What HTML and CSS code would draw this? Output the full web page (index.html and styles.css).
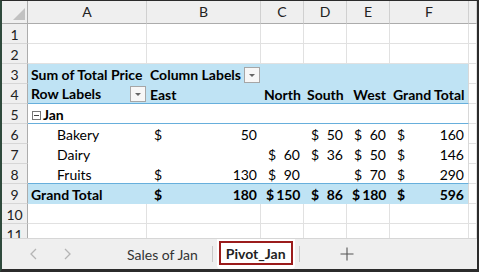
FILE: index.html
```html
<!DOCTYPE html>
<html lang="en">
<head>
<meta charset="UTF-8">
<title>Pivot_Jan</title>
<link rel="stylesheet" href="styles.css">
</head>
<body>
<div class="frame">
    <div class="sheet">
        <!-- column headers -->
        <div class="row head">
            <div class="rn corner"><span class="tri"></span></div>
            <div class="ch">A</div>
            <div class="ch">B</div>
            <div class="ch">C</div>
            <div class="ch">D</div>
            <div class="ch">E</div>
            <div class="ch">F</div>
            <div class="ch last"></div>
        </div>

        <div class="row">
            <div class="rn">1</div>
            <div class="c"></div><div class="c"></div><div class="c"></div><div class="c"></div><div class="c"></div><div class="c"></div><div class="c"></div>
        </div>
        <div class="row">
            <div class="rn">2</div>
            <div class="c"></div><div class="c"></div><div class="c"></div><div class="c"></div><div class="c"></div><div class="c"></div><div class="c"></div>
        </div>

        <!-- pivot table -->
        <div class="row">
            <div class="rn">3</div>
            <div class="c pv b">Sum of Total Price</div>
            <div class="c pv b split">Column Labels <span class="dd"></span></div>
            <div class="c pv"></div><div class="c pv"></div><div class="c pv"></div>
            <div class="c pv edge"></div>
            <div class="c"></div>
        </div>
        <div class="row">
            <div class="rn">4</div>
            <div class="c pv b line split">Row Labels <span class="dd"></span></div>
            <div class="c pv b line">East</div>
            <div class="c pv b line r">North</div>
            <div class="c pv b line r">South</div>
            <div class="c pv b line r">West</div>
            <div class="c pv b line r edge">Grand Total</div>
            <div class="c"></div>
        </div>
        <div class="row">
            <div class="rn">5</div>
            <div class="c pw b line"><span class="minus"></span>Jan</div>
            <div class="c pw line"></div><div class="c pw line"></div><div class="c pw line"></div><div class="c pw line"></div>
            <div class="c pw line edge"></div>
            <div class="c"></div>
        </div>
        <div class="row">
            <div class="rn">6</div>
            <div class="c pw item">Bakery</div>
            <div class="c pw acc"><span>$</span><span>50</span></div>
            <div class="c pw"></div>
            <div class="c pw acc"><span>$</span><span>50</span></div>
            <div class="c pw acc"><span>$</span><span>60</span></div>
            <div class="c pw acc edge"><span>$</span><span>160</span></div>
            <div class="c"></div>
        </div>
        <div class="row">
            <div class="rn">7</div>
            <div class="c pw item">Dairy</div>
            <div class="c pw"></div>
            <div class="c pw acc"><span>$</span><span>60</span></div>
            <div class="c pw acc"><span>$</span><span>36</span></div>
            <div class="c pw acc"><span>$</span><span>50</span></div>
            <div class="c pw acc edge"><span>$</span><span>146</span></div>
            <div class="c"></div>
        </div>
        <div class="row">
            <div class="rn">8</div>
            <div class="c pw item line">Fruits</div>
            <div class="c pw acc line"><span>$</span><span>130</span></div>
            <div class="c pw acc line"><span>$</span><span>90</span></div>
            <div class="c pw line"></div>
            <div class="c pw acc line"><span>$</span><span>70</span></div>
            <div class="c pw acc line edge"><span>$</span><span>290</span></div>
            <div class="c"></div>
        </div>
        <div class="row">
            <div class="rn">9</div>
            <div class="c pv b">Grand Total</div>
            <div class="c pv b acc"><span>$</span><span>180</span></div>
            <div class="c pv b acc tight"><span>$</span><span>150</span></div>
            <div class="c pv b acc"><span>$</span><span>86</span></div>
            <div class="c pv b acc tight"><span>$</span><span>180</span></div>
            <div class="c pv b acc edge"><span>$</span><span>596</span></div>
            <div class="c"></div>
        </div>

        <div class="row">
            <div class="rn">10</div>
            <div class="c"></div><div class="c"></div><div class="c"></div><div class="c"></div><div class="c"></div><div class="c"></div><div class="c"></div>
        </div>
        <div class="row">
            <div class="rn">11</div>
            <div class="c"></div><div class="c"></div><div class="c"></div><div class="c"></div><div class="c"></div><div class="c"></div><div class="c"></div>
        </div>
    </div>

    <!-- sheet tabs -->
    <div class="tabs">
        <div class="nav">
            <svg width="10" height="14" viewBox="0 0 10 14"><path d="M7 2 L2 7 L7 12" fill="none" stroke="#b4b4b4" stroke-width="1.3"/></svg>
            <svg width="10" height="14" viewBox="0 0 10 14"><path d="M3 2 L8 7 L3 12" fill="none" stroke="#b4b4b4" stroke-width="1.3"/></svg>
        </div>
        <div class="tab">Sales of Jan</div>
        <div class="sep"></div>
        <div class="tab active"><span class="box">Pivot_Jan</span></div>
        <div class="sep"></div>
        <div class="add">
            <svg width="14" height="14" viewBox="0 0 14 14"><path d="M7 0.5 V13.5 M0.5 7 H13.5" stroke="#555" stroke-width="1.1"/></svg>
        </div>
    </div>
</div>
</body>
</html>
```

FILE: styles.css
```css
/* hoja de calculo */
body {
    margin: 0;
    font-family: Lato, "Liberation Sans", sans-serif;
    font-size: 14px;
    color: #000;
    background: #fff;
}

.frame {
    width: 479px;
    height: 272px;
    box-sizing: border-box;
    border-top: 1px solid #2b2b2b;
    border-left: 2px solid #2f4a3c;
    border-right: 2px solid #2b2b2b;
    border-bottom: 3px solid #2b2b2b;
    display: flex;
    flex-direction: column;
    overflow: hidden;
}

.sheet {
    height: 237px;
    overflow: hidden;
}

.row {
    display: grid;
    grid-template-columns: 26px 119px 114px 43px 43px 43px 79px 1fr;
    height: 20px;
}

.row.head {
    height: 23px;
}

.row > div {
    box-sizing: border-box;
    height: 100%;
    line-height: 20px;
    white-space: nowrap;
    overflow: hidden;
}

/* cabeceras */
.rn {
    background: #efefef;
    border-right: 1px solid #acacac;
    border-bottom: 1px solid #d6d6d6;
    text-align: center;
    color: #222;
    padding-top: 1px;
}

.ch {
    background: #efefef;
    border-right: 1px solid #d0d0d0;
    border-bottom: 1px solid #acacac;
    text-align: center;
    color: #222;
    line-height: 22px !important;
}

.corner {
    position: relative;
    border-bottom: 1px solid #acacac;
}

.tri {
    position: absolute;
    right: 2px;
    bottom: 3px;
    width: 0;
    height: 0;
    border-left: 12px solid transparent;
    border-bottom: 12px solid #c2c2c2;
}

/* celdas */
.c {
    border-right: 1px solid #e1e1e1;
    border-bottom: 1px solid #e1e1e1;
    padding: 1px 3px 0 3px;
}

.pv {
    background: #bfe3f4;
    border-right: none;
    border-bottom: none;
}

.pw {
    border-right: none;
    border-bottom: none;
}

.c.line {
    border-bottom: 1px solid #67afdc;
}

.c.edge {
    border-right: 1px solid #d8d8d8;
}

.b {
    font-weight: bold;
}

.r {
    text-align: right;
    padding-right: 4px;
}

.item {
    padding-left: 29px;
}

.split {
    display: flex;
    justify-content: space-between;
    align-items: center;
    padding-right: 1px;
}

.dd {
    width: 14px;
    height: 14px;
    border: 1px solid #a6a6a6;
    background: #f7f7f7;
    position: relative;
    flex: none;
}

.dd::after {
    content: "";
    position: absolute;
    left: 4px;
    top: 6px;
    border-left: 3px solid transparent;
    border-right: 3px solid transparent;
    border-top: 3px solid #666;
}

.minus {
    display: inline-block;
    width: 7px;
    height: 7px;
    border: 1px solid #777;
    margin: 0 2px 0 1px;
    position: relative;
    vertical-align: 0px;
}

.minus::after {
    content: "";
    position: absolute;
    left: 1px;
    right: 1px;
    top: 3px;
    height: 1px;
    background: #444;
}

.acc {
    display: flex;
    justify-content: space-between;
    padding: 1px 4px 0 7px;
}

.acc.tight {
    padding-left: 5px;
    justify-content: flex-start;
    gap: 2px;
}

/* pestañas */
.tabs {
    flex: 1;
    background: #efefef;
    border-top: 1px solid #d6d6d6;
    display: flex;
    align-items: center;
    font-size: 14px;
    color: #333;
}

.nav {
    display: flex;
    gap: 23px;
    padding-left: 27px;
    width: 125px;
    box-sizing: border-box;
}

.tab {
    padding: 0 14px 0 0;
}

.sep {
    width: 1px;
    height: 16px;
    background: #c8c8c8;
}

.tab.active {
    background: #fff;
    align-self: stretch;
    margin: 0 4px;
    padding: 2px 2px 4px 2px;
    border-radius: 0 0 4px 4px;
    display: flex;
}

.box {
    border: 2px solid #9b1c1c;
    padding: 0 5px;
    display: flex;
    align-items: center;
    font-weight: bold;
    color: #222;
}

.add {
    padding-left: 40px;
    display: flex;
}
```
